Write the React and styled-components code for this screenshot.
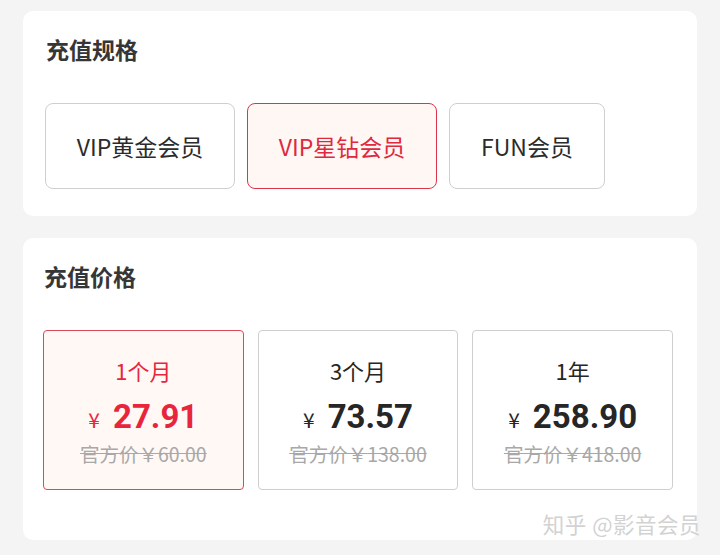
import React, { useState } from 'react'
import styled, { createGlobalStyle } from 'styled-components'

const specs = ['VIP黄金会员', 'VIP星钻会员', 'FUN会员']

const plans = [
  { label: '1个月', price: '27.91', official: '60.00' },
  { label: '3个月', price: '73.57', official: '138.00' },
  { label: '1年', price: '258.90', official: '418.00' },
]

const App = () => {
  const [spec, setSpec] = useState(1)
  const [plan, setPlan] = useState(0)

  return (
    <>
      <GlobalStyle />
      <Page>
        <Card>
          <Title>充值规格</Title>
          <SpecRow>
            {specs.map((s, i) => (
              <SpecButton key={s} $active={spec === i} $wide={i < 2} onClick={() => setSpec(i)}>
                {s}
              </SpecButton>
            ))}
          </SpecRow>
        </Card>

        <PriceCard>
          <Title>充值价格</Title>
          <PlanRow>
            {plans.map((p, i) => (
              <PlanBox key={p.label} $active={plan === i} onClick={() => setPlan(i)}>
                <PlanLabel>{p.label}</PlanLabel>
                <Price>
                  <span className='yen'>¥</span>
                  <span className='num'>{p.price}</span>
                </Price>
                <Official>官方价￥{p.official}</Official>
              </PlanBox>
            ))}
          </PlanRow>
          <Watermark>知乎 @影音会员</Watermark>
        </PriceCard>
      </Page>
    </>
  )
}

export default App

// <----------------------------------------- CSS ------------------------------------------------->

const GlobalStyle = createGlobalStyle`
body{
    margin: 0;
    background: #f4f4f4;
    font-family: "Noto Sans CJK SC", "Noto Sans", sans-serif;
}
`

const Page = styled.div`
width: 720px;
height: 555px;
padding: 11px 23px 0 23px;
box-sizing: border-box;
display: flex;
flex-direction: column;
gap: 22px;
`

const Card = styled.div`
background: #fff;
border-radius: 10px;
padding: 23px 22px 27px 22px;
display: flex;
flex-direction: column;
gap: 39px;
`

const PriceCard = styled(Card)`
position: relative;
padding: 23px 24px 50px 20px;
`

const Title = styled.div`
font-size: 23px;
font-weight: 700;
color: #363636;
line-height: 30px;
padding-left: 1px;
`

const SpecRow = styled.div`
display: flex;
gap: 12px;
`

const SpecButton = styled.div`
width: ${p => (p.$wide ? '190px' : '156px')};
height: 86px;
box-sizing: border-box;
border-radius: 8px;
border: 1.5px solid ${p => (p.$active ? '#d9364a' : '#cfcfcf')};
background: ${p => (p.$active ? '#fff7f4' : '#fff')};
color: ${p => (p.$active ? '#e0283f' : '#2b2b2b')};
font-size: 23px;
display: flex;
align-items: center;
justify-content: center;
cursor: pointer;
`

const PlanRow = styled.div`
display: grid;
grid-template-columns: repeat(3, 1fr);
gap: 14px;
`

const PlanBox = styled.div`
height: 160px;
box-sizing: border-box;
border-radius: 4px;
border: 1.5px solid ${p => (p.$active ? '#d84a58' : '#cfcfcf')};
background: ${p => (p.$active ? '#fff8f5' : '#fff')};
color: ${p => (p.$active ? '#e8253d' : '#262626')};
display: flex;
flex-direction: column;
align-items: center;
justify-content: center;
cursor: pointer;
`

const PlanLabel = styled.div`
font-size: 22px;
line-height: 30px;
`

const Price = styled.div`
display: flex;
align-items: baseline;
gap: 13px;
line-height: 48px;
margin-top: 8px;

.yen{
    font-size: 21px;
}
.num{
    font-size: 33px;
    font-weight: 700;
    font-family: "Roboto", "Noto Sans", sans-serif;
}
`

const Official = styled.div`
font-size: 19.5px;
line-height: 22px;
color: #a8a8a8;
text-decoration: line-through;
`

const Watermark = styled.div`
position: absolute;
right: -4px;
bottom: 1px;
font-size: 21.5px;
color: #d2d2d2;
letter-spacing: 0.5px;
`
